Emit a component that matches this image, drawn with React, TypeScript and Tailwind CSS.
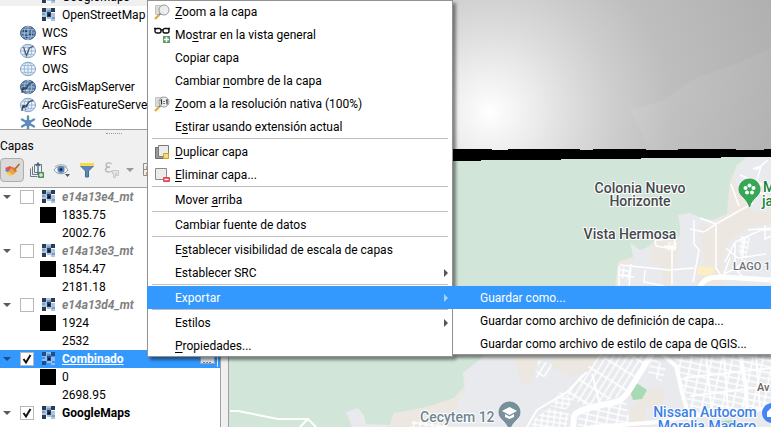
import type { ReactNode } from 'react';

type LayerRow =
  | { kind: 'layer'; name: string; checked: boolean; state: 'off' | 'on' | 'selected' }
  | { kind: 'min' | 'max'; value: string };

const layerRows: LayerRow[] = [
  { kind: 'layer', name: 'e14a13e4_mt', checked: false, state: 'off' },
  { kind: 'min', value: '1835.75' },
  { kind: 'max', value: '2002.76' },
  { kind: 'layer', name: 'e14a13e3_mt', checked: false, state: 'off' },
  { kind: 'min', value: '1854.47' },
  { kind: 'max', value: '2181.18' },
  { kind: 'layer', name: 'e14a13d4_mt', checked: false, state: 'off' },
  { kind: 'min', value: '1924' },
  { kind: 'max', value: '2532' },
  { kind: 'layer', name: 'Combinado', checked: true, state: 'selected' },
  { kind: 'min', value: '0' },
  { kind: 'max', value: '2698.95' },
  { kind: 'layer', name: 'GoogleMaps', checked: true, state: 'on' },
];

const nameStyle = {
  off: 'font-bold italic text-[#808080]',
  on: 'font-bold text-black',
  selected: 'font-bold text-white underline',
};

function RasterIcon({ tinted = false }: { tinted?: boolean }) {
  return (
    <svg viewBox="0 0 14 14" className="h-3.5 w-3.5 shrink-0" shapeRendering="crispEdges">
      <path fill={tinted ? '#8fbdf0' : '#a9c4e4'} d="M0 0h13v13H0z" />
      <path fill={tinted ? '#3399ff' : '#ffffff'} d="M4 9h1v4H4zM9 4h4v1H9zM5 11h4v2H5z" />
      <path fill={tinted ? '#1f4f86' : '#2b3c55'} d="M0 0h4v4H0zM9 0h4v4H9zM5 4h4v5H5zM0 9h4v4H0z" />
      <path fill={tinted ? '#4f8fd6' : '#7d9dc3'} d="M5 2h4v2H5zM0 5h3v2H0zM10 9h3v2h-3z" />
      <path fill="#10161f" d="M6 6h2v2H6z" />
    </svg>
  );
}

function Globe({ variant }: { variant: 'dark' | 'light' | 'vector' | 'arcmap' | 'arcfeature' }) {
  const dark = variant === 'dark' || variant === 'arcmap';
  const line = dark ? '#a9c3de' : '#8fb0d4';
  return (
    <svg viewBox="0 0 16 16" className="h-4 w-4 shrink-0" fill="none">
      <ellipse cx="8" cy="8" rx="7.5" ry="6.7" fill={dark ? '#567aa3' : '#f1f6fb'} stroke={dark ? '#3d6088' : '#7ba0c8'} />
      {variant === 'dark' && <path fill="#203c5f" d="M3 4h4v3H3zM9 7h4v3H9zM5 10h3v3H5zM10 3h2v3h-2z" />}
      <path stroke={line} strokeWidth=".9" d="M.8 8h14.4M2 4.700h12M2 11.300h12M8 1.300v13.400" />
      <ellipse cx="8" cy="8" rx="3.800" ry="6.700" stroke={line} strokeWidth=".9" />
      {variant === 'vector' && <path stroke="#4d5966" strokeWidth="1.200" d="M3.500 4l3 8.500L9.500 5l4-2" />}
      {(variant === 'arcmap' || variant === 'arcfeature') && (
        <>
          <path stroke="#33475e" strokeWidth="1.300" d="M2 14c0-4 1-5.500 3-5s2-2 4-4 3-.5 4-2M6 13c-.5-2.500 0-3.500 1.500-5" />
          <circle cx="3.500" cy="9.500" r="1.500" fill="#33475e" />
          <circle cx="6.500" cy="11.500" r="1" fill="#dfe8f2" />
        </>
      )}
    </svg>
  );
}

function GeoNodeIcon() {
  return (
    <svg viewBox="0 0 16 16" className="h-4 w-4 shrink-0" fill="#5f8cb8" stroke="#5f8cb8" strokeWidth="2.400" strokeLinecap="round">
      <path d="M8 1.500v13M2 4.500l12 7M2 11.500l12-7" />
      <circle cx="8" cy="8" r="2" />
    </svg>
  );
}

const services: { name: string; icon: ReactNode; nested?: boolean }[] = [
  { name: 'GoogleMaps', icon: <RasterIcon />, nested: true },
  { name: 'OpenStreetMap', icon: <RasterIcon />, nested: true },
  { name: 'WCS', icon: <Globe variant="dark" /> },
  { name: 'WFS', icon: <Globe variant="vector" /> },
  { name: 'OWS', icon: <Globe variant="light" /> },
  { name: 'ArcGisMapServer', icon: <Globe variant="arcmap" /> },
  { name: 'ArcGisFeatureServer', icon: <Globe variant="arcfeature" /> },
  { name: 'GeoNode', icon: <GeoNodeIcon /> },
];

function Browser() {
  return (
    <div className="h-[130px] overflow-hidden border-b border-[#a0a0a0] bg-white">
      <ul className="-mt-3">
        {services.map((s, i) => (
          <li
            key={s.name}
            className={`flex h-[18px] items-center gap-1.5 whitespace-nowrap ${s.nested ? 'pl-[42px]' : 'pl-5'} ${i === 0 ? 'bg-[#f0f0f0]' : ''}`}
          >
            {s.icon}
            <span>{s.name}</span>
          </li>
        ))}
      </ul>
    </div>
  );
}

const tool = 'flex h-6 w-6 shrink-0 items-center justify-center';

function Toolbar() {
  return (
    <div className="flex h-[31px] items-center gap-px overflow-hidden pb-1">
      <button type="button" aria-label="Estilo de capas" className={`${tool} rounded-sm border border-[#adadad] bg-[#dadada]`}>
        <svg viewBox="0 0 18 18" className="h-[18px] w-[18px] shrink-0">
          <path fill="#e8504a" d="M2 7l5-2 3 2-5 4z" />
          <path fill="#f4cf4a" d="M2 10l4-1 5 4-3 2-3-1z" />
          <path fill="#5b7fd0" d="M2 9l3-1 2 2-3 1z" />
          <path fill="#eda04a" d="M7 8l4-2 3 4-4 4-4-3z" />
          <path fill="#c9762f" d="M10 6l4 4-2 1-3-4z" />
          <path stroke="#b5672a" strokeWidth="1.800" strokeLinecap="round" d="M12.500 7.500L16 3.500" />
        </svg>
      </button>
      <button type="button" aria-label="Añadir grupo" className={tool}>
        <svg viewBox="0 0 16 16" className="h-4 w-4" fill="none" stroke="#6b7886">
          <path d="M1.500 6.500v8h7M3.500 4.500v8h7M5.500 2.500h7v8h-7z" />
          <path stroke="#3f6189" strokeWidth="1.300" d="M9 12V2M7 4l2-3 2 3" />
          <path fill="#5d9c6a" stroke="#4d8a5b" d="M9.500 10.500h5v5h-5z" />
          <path stroke="#fff" d="M12 11v4M10 13h4" />
        </svg>
      </button>
      <button type="button" aria-label="Temas del mapa" className={tool}>
        <svg viewBox="0 0 18 16" className="h-4 w-[18px]" fill="none">
          <path fill="#f7f9fb" stroke="#8d9aa6" d="M1 8c3-5 11-5 14 0-3 5-11 5-14 0z" />
          <path stroke="#9aa5ae" d="M2 5c3-3 9-3 12 0" />
          <circle cx="8" cy="7.500" r="3.600" fill="#5585b8" />
          <circle cx="8" cy="7.500" r="1.500" fill="#15304e" />
          <path fill="#555" d="M12 12h5l-2.500 3z" />
        </svg>
      </button>
      <button type="button" aria-label="Filtrar leyenda" className={tool}>
        <svg viewBox="0 0 16 16" className="h-4 w-4">
          <path fill="#5b88b8" stroke="#456c97" d="M1.500 2h13v2l-5 5v6h-3V9l-5-5z" />
          <path fill="#f6d94c" d="M1 1h14v3H1z" />
        </svg>
      </button>
      <button type="button" aria-label="Filtrar por expresión" disabled className={tool}>
        <svg viewBox="0 0 16 16" className="h-4 w-4" fill="none" stroke="#b9b9b9" strokeWidth="1.400">
          <path d="M7.500 2C5 0 2 1 2 3c0 1.500 2 2 4 2C3 5 1.500 6 1.500 7.500 1.500 10.500 6 10.500 8 9" />
          <path stroke="#c8c8c8" fill="#e4e4e4" strokeWidth="1" d="M8.500 8.500h6v5h-2v-2h-1v4h-2v-4h-1z" />
        </svg>
      </button>
      <button type="button" aria-label="Más filtros" disabled className="flex h-6 w-[10px] shrink-0 items-center justify-center">
        <svg viewBox="0 0 8 4" className="h-1 w-2"><path fill="#999" d="M0 0h8L4 4z" /></svg>
      </button>
      <button type="button" aria-label="Expandir todo" className="ml-1.5 flex h-6 w-6 shrink-0 items-center">
        <svg viewBox="0 0 16 16" className="h-4 w-4" fill="none">
          <path stroke="#8f8f8f" d="M6 1.500H1.500v12H6M1.500 7.500H5" />
          <path fill="#ef9a3d" d="M4 4h3v3H4zM4 10h3v3H4z" />
        </svg>
      </button>
    </div>
  );
}

function LayerItem({ row }: { row: LayerRow }) {
  if (row.kind !== 'layer') {
    return (
      <li className="flex h-[18px] items-center gap-1.5 pl-10">
        <span className={`h-4 w-4 shrink-0 ${row.kind === 'min' ? 'bg-black' : 'bg-white'}`} />
        <span>{row.value}</span>
      </li>
    );
  }
  const selected = row.state === 'selected';
  return (
    <li className={`flex h-[18px] items-center pl-[3px] ${selected ? 'bg-[#3399ff]' : ''}`}>
      <svg viewBox="0 0 8 4" className="mr-[9px] h-1 w-2 shrink-0">
        <path fill={selected ? '#1d4f82' : '#5a5a5a'} d="M0 0h8L4 4z" />
      </svg>
      <label className="flex items-center">
        <span className="relative mr-2 flex h-3.5 w-3.5 shrink-0">
          <input
            type="checkbox"
            defaultChecked={row.checked}
            className="peer h-3.5 w-3.5 appearance-none border border-[#b8b8b8] bg-white"
          />
          <svg viewBox="0 0 14 14" className="pointer-events-none absolute inset-0 hidden h-3.5 w-3.5 peer-checked:block" fill="none">
            <path stroke="#111" strokeWidth="2" d="M3.500 7l2.500 3.500L10.500 3" />
          </svg>
        </span>
        <RasterIcon tinted={selected} />
        <span className={`ml-1.5 ${nameStyle[row.state]}`}>{row.name}</span>
      </label>
      {selected && (
        <svg viewBox="0 0 20 16" className="ml-auto h-4 w-5 shrink-0" fill="none">
          <path fill="#e3ebf3" stroke="#94a9bf" d="M.5 .5h14v12H.5z" />
          <path stroke="#6d8299" strokeDasharray="2 1" d="M3 11.500h9" />
          <path stroke="#d6e8fb" d="M17.500 0v16" />
        </svg>
      )}
    </li>
  );
}

function Sidebar() {
  return (
    <aside className="flex w-[229px] shrink-0 flex-col border-r border-[#a0a0a0] bg-[#f0f0f0]">
      <Browser />
      <div className="flex h-2 justify-center pt-[3px]">
        <span className="h-px w-4 border-t border-dotted border-[#999]" />
      </div>
      <h2 className="h-[18px] leading-4">Capas</h2>
      <Toolbar />
      <ul className="mr-[7px] flex-1 border-t border-r border-[#a0a0a0] bg-white">
        {layerRows.map((row, i) => (
          <LayerItem key={i} row={row} />
        ))}
      </ul>
    </aside>
  );
}

function MapCanvas() {
  return (
    <svg viewBox="229 0 542 427" preserveAspectRatio="xMinYMin slice" className="absolute inset-0 h-full w-full" fill="none">
      <defs>
        <radialGradient id="dem" gradientUnits="userSpaceOnUse" cx="490" cy="112" r="300">
          <stop offset="0" stopColor="#ffffff" />
          <stop offset=".06" stopColor="#f7f7f7" />
          <stop offset=".16" stopColor="#ebebeb" />
          <stop offset=".28" stopColor="#dcdcdc" />
          <stop offset=".42" stopColor="#cdcdcd" />
          <stop offset=".6" stopColor="#bebebe" />
          <stop offset="1" stopColor="#b0b0b0" />
        </radialGradient>
        <linearGradient id="ridge" x1="0" y1="0" x2="1" y2="1">
          <stop offset="0" stopColor="#fff" stopOpacity=".1" />
          <stop offset="1" stopColor="#fff" stopOpacity="0" />
        </linearGradient>
        <pattern id="blocks" width="10" height="6" patternUnits="userSpaceOnUse" patternTransform="rotate(12)">
          <path stroke="#fff" strokeWidth="1.600" d="M0 1h10M1 0v6" />
        </pattern>
        <pattern id="slant" width="16" height="6" patternUnits="userSpaceOnUse" patternTransform="rotate(-58)">
          <path stroke="#fff" strokeWidth="1.600" d="M0 1h16M1 0v6" />
        </pattern>
        <pattern id="tight" width="6" height="5" patternUnits="userSpaceOnUse" patternTransform="rotate(8)">
          <path stroke="#fff" strokeWidth="1.400" d="M0 1h6M1 0v5" />
        </pattern>
      </defs>

      <path fill="#d1e6d9" d="M229 0h542v427H229z" />

      {/* hillside and city, north */}
      <path fill="#ece8e1" d="M746 157l-8 8-8 15-2 22-1 12-24 10-22 12-24 3-21 17-18 6-3 26h156V157z" />
      <path fill="#e8eaed" d="M771 157v54l-14 2-10-9-6-14-8-12 4-13 14-8z" />
      <path fill="#e8eaed" d="M771 224l-24 3-18 14-7 20 2 27h47zM678 215l12-2 12 5 14 3-4 6-10-3-1 20 4 20-7 4-3 20h-20l-4-14 9-26v-22zM630 243l10 7 13-4-3 16 12 4 2 22h-46l1-22 16-3z" />
      <path fill="#fcefc3" d="M698 266l17 2-3 8-15-2z" />
      <g stroke="#fff" strokeWidth="1.500">
        <path d="M753 203l-37 21-12 8-14-3M716 224v44l8 12M716 224l-16-6M694 220v24l5 6-6 32M620 265l50 5 24-2M672 245v40M655 240l20-1-1 10-18-3zM619 266v22M631 264l-2 24M622 275l12 2M645 270l-1 12 20 4" />
        <path d="M731 184l8 22M740 175l22 9-10 5 15 7M753 169l8-3-4 14M768 160l-12 10M725 262l10-20 26-12h10M726 248l12 10 28-4M730 258l-6 16 12-6 10-8M735 243v18M745 238l-3 22M765 225v14l6-3M748 230l23-2M732 266l12 12" />
      </g>
      <path fill="url(#tight)" d="M620 267l12 1-2 12-11-2zM665 242l12 1-1 8-12-1zM740 236l10 2-4 20-8-4z" />
      <path stroke="#fff" strokeWidth="5" d="M699 290c3-11 10-13 24-13l48 3" />

      {/* city, south */}
      <path fill="#ece8e1" d="M484 354l-9 12-12 6 1 15-10 11-28 9-32 6-5 14h382v-73z" />
      <path fill="#e8eaed" d="M484 356l-21 17 4 14-8 14-10 26h322v-73H516l-6 4-10-4zM346 412l12-4 6 8 2 8 24 1-2 2h-36z" />
      <path fill="#ece8e1" d="M512 354h30l-14 32-6-2zM557 354h43l-12 19-18 3-20-9z" />
      <path fill="url(#slant)" d="M600 354h50l-28 42-36 10-22-10 18-22zM538 360l14 4-4 12-12 2z" />
      <path fill="url(#tight)" d="M560 392l14 8-8 10-16-4zM550 408l20 6-4 13h-36l6-10z" />
      <path fill="url(#blocks)" d="M674 354h97v54l-78 8-12-34zM578 412l48-12 4 27h-52zM652 356l14 12-4 14-14-8z" />
      <path fill="url(#tight)" d="M412 421l20-3 18 9h-40z" />
      <path fill="#ece8e1" d="M646 390l14-4 5 8-3 12-16 3-2 18h-15l2-18 9-10z" />
      <path fill="#a8dab5" d="M635 382l12 8-5 9-9 1-3-9z" />
      <g stroke="#fff">
        <path strokeWidth="6" d="M652 354l-14 22c-8 14-14 24-22 26-16 4-38 6-42 14l-1 14" />
        <path strokeWidth="4" d="M662 354l14 12 6 26 8 28M740 354l6 34 1 24M590 427l70-5 30-6 81-8" />
        <path strokeWidth="2" d="M230 411h8l40 8h30l8 8M308 419l-8 8M587 372l-20 20-30 18-10 17M600 404l-8-30" />
        <path strokeWidth="2" d="M706 354l6 60M724 354l4 58M684 378l87-10M690 396l81-10M756 354l4 56" />
      </g>
      <path fill="#a8dab5" d="M722 421l14-1 1 7h-17z" />

      {/* elevation raster and its ragged lower edge */}
      <path fill="url(#dem)" d="M229 0h542v152H229z" />
      <path fill="url(#ridge)" d="M771 48l-30 14-47 17-32 22-32 9 20 40h121z" />
      <path fill="#000" d="M229 149h263v1h16v-1h72v1h13v-1h53v1h32v-1h58v1h28v-1h7v8h-50v1h-80v1h-80v1h-80v1H229z" />

      <g fontFamily="Roboto, sans-serif" fontSize="14" fontWeight="500" stroke="#fff" strokeWidth="2" strokeLinejoin="round" paintOrder="stroke">
        <g fill="#45494d" textAnchor="middle">
          <text x="640" y="193">Colonia Nuevo</text>
          <text x="640" y="206">Horizonte</text>
          <text x="630" y="239">Vista Hermosa</text>
        </g>
        <text x="733" y="270" fontSize="11" fill="#6b7075">LAGO 1</text>
        <text x="763" y="192" fill="#188038">M</text>
        <text x="762" y="206" fill="#188038">ja</text>
        <text x="420" y="422" fill="#6f8591">Cecytem 12</text>
        <text x="757" y="391" fontSize="11" fill="#6c625a">Av</text>
        <g fill="#3d7fe8" textAnchor="middle">
          <text x="705" y="417">Nissan Autocom</text>
          <text x="707" y="431">Morelia Madero</text>
        </g>
      </g>

      <path fill="#34a853" stroke="#2a9048" strokeWidth=".8" d="M749.500 179c-6 0-10.500 4.500-10.500 10.500 0 7 8 8 10.500 17.500 2.500-9.500 10.500-10.500 10.500-17.500 0-6-4.500-10.500-10.500-10.500z" />
      <g fill="#fff">
        <circle cx="749.500" cy="185.500" r="2" />
        <circle cx="753.500" cy="188" r="2" />
        <circle cx="752" cy="192.500" r="2" />
        <circle cx="747" cy="192.500" r="2" />
        <circle cx="745.500" cy="188" r="2" />
      </g>
      <circle cx="749.500" cy="189.500" r="1.300" fill="#34a853" />
      <path fill="#78909c" stroke="#6a828e" strokeWidth=".8" d="M509.500 402c-6 0-10.500 4.500-10.500 10.500 0 7 8 8 10.500 17.500 2.500-9.500 10.500-10.500 10.500-17.500 0-6-4.500-10.500-10.500-10.500z" />
      <path fill="#fff" d="M509.500 407l7.500 4-7.500 4-7.500-4zM505 414l4.500 2.500 4.500-2.500v3l-4.500 2-4.500-2z" />
      <circle cx="772" cy="413" r="10" fill="#4285f4" />
      <path fill="#fff" d="M767 412l4-4v9h-4z" />
    </svg>
  );
}

const ZoomIcon = ({ native = false }: { native?: boolean }) => (
  <svg viewBox="0 0 16 16" className="h-4 w-4" fill="none">
    <path fill="#dcdcdc" stroke="#c4c4c4" d="M1.500 1.500h8v9h-8z" />
    <path stroke="#e0ad3a" strokeWidth="2.400" d="M1 15l4-4" />
    <path stroke="#777" strokeWidth="1.600" d="M5 11l2-2" />
    <circle cx="10" cy="6" r="5" fill="#ededed" fillOpacity=".9" stroke="#9a9a9a" />
    {native && <path stroke="#333" strokeWidth="1.200" d="M6.500 4.500l1-.5v4.500M12 4.500l1-.5v4.500M10 5v1M10 7v1" />}
  </svg>
);

const GlassesIcon = () => (
  <svg viewBox="0 0 16 16" className="h-4 w-4" fill="none">
    <path stroke="#111" strokeWidth="1.400" d="M0 1.500h2M14 1.500h2M7 3h2" />
    <rect x="1" y="1.500" width="6" height="4.500" rx="2" stroke="#111" strokeWidth="1.400" />
    <rect x="9" y="1.500" width="6" height="4.500" rx="2" stroke="#111" strokeWidth="1.400" />
    <path fill="#5f9a6b" d="M9 9h7v7H9z" />
    <path stroke="#fff" strokeWidth="1.600" d="M12.500 10v5M10 12.500h5" />
  </svg>
);

const DuplicateIcon = () => (
  <svg viewBox="0 0 16 16" className="h-4 w-4" fill="none">
    <path fill="#9a9a9a" stroke="#6c6c6c" d="M1.500 3.500h9v11h-9z" />
    <path fill="#ececec" stroke="#7b7b7b" d="M4.500 1.500h10v11h-10z" />
    <path fill="#f3dc7a" stroke="#c9a227" d="M9.500 9.500h5v5h-5z" />
  </svg>
);

const RemoveIcon = () => (
  <svg viewBox="0 0 16 16" className="h-4 w-4" fill="none">
    <path fill="#ececec" stroke="#8a8a8a" d="M1.500 1.500h11v11h-11z" />
    <rect x="9" y="10" width="7" height="5" rx="1" fill="#e8464d" />
    <path stroke="#fff" strokeWidth="1.400" d="M10.500 12.500h4" />
  </svg>
);

type Entry = { before?: string; key?: string; after: string; icon?: ReactNode; submenu?: boolean; active?: boolean };

const groups: Entry[][] = [
  [
    { key: 'Z', after: 'oom a la capa', icon: <ZoomIcon /> },
    { before: 'Mo', key: 's', after: 'trar en la vista general', icon: <GlassesIcon /> },
    { after: 'Copiar capa' },
    { before: 'Cambiar ', key: 'n', after: 'ombre de la capa' },
    { key: 'Z', after: 'oom a la resolución nativa (100%)', icon: <ZoomIcon native /> },
    { before: 'E', key: 's', after: 'tirar usando extensión actual' },
  ],
  [
    { key: 'D', after: 'uplicar capa', icon: <DuplicateIcon /> },
    { key: 'E', after: 'liminar capa...', icon: <RemoveIcon /> },
  ],
  [{ before: 'Mover ', key: 'a', after: 'rriba' }],
  [{ after: 'Cambiar fuente de datos' }],
  [
    { before: 'E', key: 's', after: 'tablecer visibilidad de escala de capas' },
    { after: 'Establecer SRC', submenu: true },
  ],
  [{ after: 'Exportar', submenu: true, active: true }],
  [
    { after: 'Estilos', submenu: true },
    { key: 'P', after: 'ropiedades...' },
  ],
];

const exportEntries: Entry[] = [
  { after: 'Guardar como...', active: true },
  { after: 'Guardar como archivo de definición de capa...' },
  { after: 'Guardar como archivo de estilo de capa de QGIS...' },
];

const menuBox = 'absolute bg-white shadow-[inset_0_0_0_1px_#929292,3px_3px_3px_rgba(0,0,0,0.45)]';

function MenuItem({ entry }: { entry: Entry }) {
  return (
    <button
      type="button"
      role="menuitem"
      className={`flex h-[23px] w-full items-center pr-[5px] pl-[7px] text-left whitespace-nowrap ${entry.active ? 'bg-[#3399ff] text-white' : ''}`}
    >
      <span className="mr-[5px] h-4 w-4 shrink-0">{entry.icon}</span>
      <span className="flex-1">
        {entry.before}
        {entry.key && <span className="underline underline-offset-2">{entry.key}</span>}
        {entry.after}
      </span>
      {entry.submenu && (
        <svg viewBox="0 0 4 8" className="h-2 w-1">
          <path fill={entry.active ? '#a9d2fb' : '#555'} d="M0 0l4 4-4 4z" />
        </svg>
      )}
    </button>
  );
}

function ContextMenu() {
  return (
    <div role="menu" className={`${menuBox} top-0 left-[147px] w-[306px]`}>
      {groups.map((group, i) => (
        <div key={i}>
          {i > 0 && <div role="separator" className="mx-[5px] h-0.5 border-t border-[#bdbdbd]" />}
          {group.map((entry) => (
            <div key={entry.after} className={entry.active ? 'relative' : ''}>
              <MenuItem entry={entry} />
              {entry.active && (
                <div role="menu" className={`${menuBox} top-0 left-full -ml-px w-[340px]`}>
                  {exportEntries.map((e) => (
                    <MenuItem key={e.after} entry={e} />
                  ))}
                </div>
              )}
            </div>
          ))}
        </div>
      ))}
    </div>
  );
}

export default function App() {
  return (
    <div className="relative flex min-h-screen overflow-hidden font-['Segoe_UI',Roboto,sans-serif] text-xs text-black">
      <Sidebar />
      <main className="relative flex-1">
        <MapCanvas />
      </main>
      <ContextMenu />
    </div>
  );
}
